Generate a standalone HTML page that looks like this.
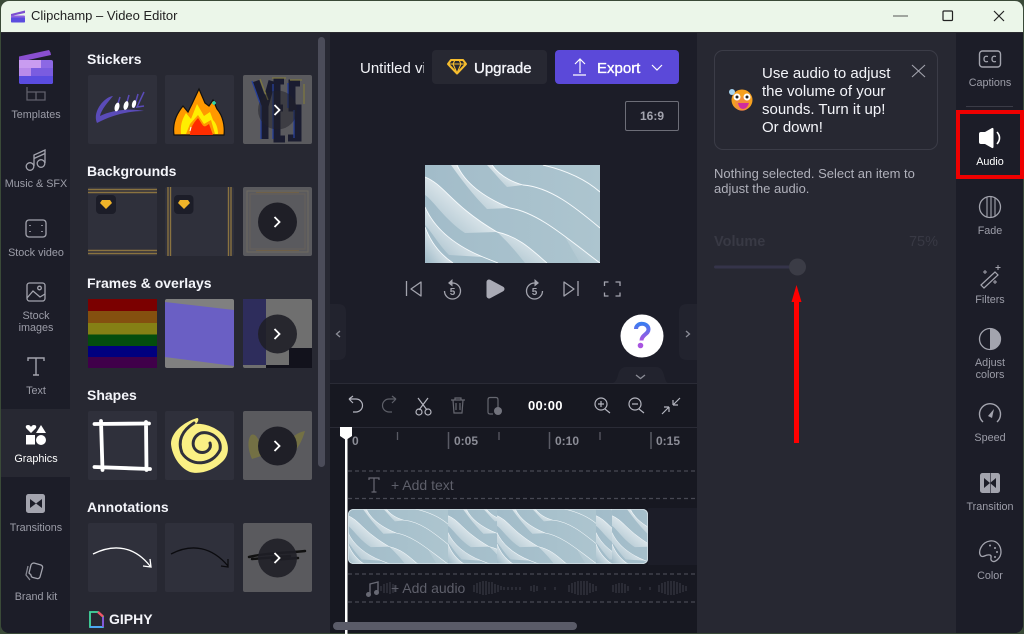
<!DOCTYPE html>
<html lang="en"><head><meta charset="utf-8"><title>Clipchamp – Video Editor</title>
<style>
html,body{margin:0;padding:0;width:1024px;height:634px;overflow:hidden;background:#3a4a38}
body{font-family:"Liberation Sans",sans-serif;position:relative}
div{position:absolute;box-sizing:border-box}
.t{white-space:nowrap;line-height:16px}
.l{font-size:10.8px;color:#9c9da8;text-align:center;width:68px;line-height:12px}
.h{font-size:14px;font-weight:700;color:#f4f5fa;left:87px;white-space:nowrap;line-height:18px}
.r{font-size:10.8px;color:#9c9da8;text-align:center;width:68px;left:956px;line-height:12px}
.tick{font-size:12px;font-weight:700;color:#8b8c96;white-space:nowrap;line-height:14px}
svg{position:absolute;left:0;top:0}
</style></head><body>
<div style="left:1px;top:1px;width:1022px;height:632px;border-radius:8px;overflow:hidden;background:#1c1d28"></div>
<div style="left:1px;top:1px;width:1022px;height:32px;background:#ebf6e9;border-radius:8px 8px 0 0;border-bottom:1px solid #2a2a30"></div>
<div class="t" style="left:31px;top:8px;font-size:13px;color:#222">Clipchamp – Video Editor</div>

<div style="left:1px;top:33px;width:69px;height:600px;background:#1c1d28;border-radius:0 0 0 8px"></div>
<div style="left:1px;top:409px;width:69px;height:68px;background:#272832"></div>
<div style="left:70px;top:33px;width:260px;height:600px;background:#272832"></div>
<div style="left:697px;top:33px;width:259px;height:600px;background:#272832"></div>
<div style="left:956px;top:33px;width:67px;height:600px;background:#1c1d28;border-radius:0 0 8px 0"></div>
<div style="left:330px;top:384px;width:367px;height:249px;background:#171821"></div>
<div style="left:330px;top:383px;width:367px;height:1px;background:#2a2b36"></div>
<div style="left:330px;top:427px;width:367px;height:1px;background:#2a2b36"></div>

<div style="left:432px;top:50px;width:115px;height:34px;background:#272832;border-radius:4px"></div>
<div style="left:555px;top:50px;width:124px;height:34px;background:#5b49d9;border-radius:4px"></div>
<div style="left:625px;top:101px;width:54px;height:30px;border:1px solid #6d6e78;border-radius:2px"></div>
<div style="left:714px;top:50px;width:224px;height:100px;border:1px solid #3b3c47;border-radius:9px"></div>

<svg width="1024" height="634" viewBox="0 0 1024 634" fill="none">
<defs>
<linearGradient id="hl" x1="1" y1="0" x2="0" y2="1"><stop offset=".15" stop-color="#fff" stop-opacity="1"/><stop offset=".95" stop-color="#fff" stop-opacity="0"/></linearGradient>
<linearGradient id="bg" x1="0" y1="0" x2="1" y2="0"><stop offset="0" stop-color="#a2bcc9"/><stop offset="1" stop-color="#adc5cf"/></linearGradient>
<linearGradient id="q" x1="0" y1="0" x2="0" y2="1"><stop offset="0" stop-color="#3c7cf0"/><stop offset="1" stop-color="#a855e0"/></linearGradient>
<clipPath id="cw"><rect width="175" height="98"/></clipPath>
<symbol id="w" viewBox="0 0 175 98" preserveAspectRatio="none">
<g clip-path="url(#cw)">
<rect width="175" height="98" fill="url(#bg)"/>
<path d="M0 12C20 20 26 40 72 67L40 68C20 55 8 35 0 30Z" fill="url(#hl)"/>
<path d="M32 0C40 18 58 32 85 43L62 44C48 30 36 14 26 0Z" fill="url(#hl)"/>
<path d="M67 0C74 10 84 16 98 20L82 22C74 14 68 6 62 0Z" fill="url(#hl)"/>
<path d="M0 42C8 60 24 78 58 92L24 90C14 80 6 66 0 60Z" fill="url(#hl)"/>
<path d="M0 62C6 78 16 90 28 98L0 98Z" fill="url(#hl)"/>
<path d="M72 67C95 72 108 86 122 98L100 98C92 88 84 78 72 67Z" fill="url(#hl)" opacity=".7"/>
<path d="M140 72C155 80 165 90 175 98L155 98Z" fill="url(#hl)" opacity=".3"/>
<g stroke="#f7fbfd" stroke-width=".9">
<path d="M0 12C20 20 26 40 72 67C95 72 108 86 122 98"/>
<path d="M32 0C40 18 58 32 85 43C115 48 145 76 175 98"/>
<path d="M67 0C74 10 84 16 98 20C125 22 150 42 175 63"/>
<path d="M118 0C135 4 158 12 175 27"/>
<path d="M0 42C8 60 24 78 58 92L73 98"/>
<path d="M0 62C6 78 16 90 28 98"/>
</g></g></symbol>
</defs>

<!-- title bar -->
<path d="M11 14L25 10.5V13L11 16Z" fill="#7c4fd0"/><rect x="11" y="15.5" width="14" height="7" rx="1" fill="#8d63e0"/><rect x="11" y="17.5" width="14" height="5" rx="1" fill="#5a4cde"/>
<path d="M893 16H908" stroke="#555" stroke-width="1"/>
<rect x="943" y="11" width="9.5" height="9.5" rx="1" stroke="#222" stroke-width="1.2"/>
<path d="M994 11L1004 21M1004 11L994 21" stroke="#222" stroke-width="1.2"/>

<!-- logo -->
<path d="M19 56.500L49 50L50.500 52.500L51 55L19 62Z" fill="#8a4fd0"/>
<rect x="19" y="60" width="34" height="24" rx="2" fill="#8c68e4"/>
<rect x="19" y="60" width="22" height="8" fill="#c99cf0"/><rect x="19" y="68" width="12" height="8" fill="#b98aea"/><rect x="31" y="68" width="22" height="8" fill="#7a5ce0"/><path d="M19 76H53V82Q53 84 51 84H21Q19 84 19 82Z" fill="#5a4ce0"/>
<!-- sidebar icons -->
<g stroke="#a3a4ae" stroke-width="1.300">
<path d="M27 92H45V100H27ZM27 92V87M36 92V100" opacity=".5"/>
<path d="M34 166V155L45 150V163"/><circle cx="30" cy="166.500" r="3.800"/><circle cx="41" cy="163.500" r="3.800"/><path d="M34 158.500L45 153.500"/>
<rect x="26" y="220" width="20" height="17" rx="3"/><path d="M30 225v1M30 231v1M42 225v1M42 231v1" stroke-width="1.600"/>
<rect x="27" y="283" width="18" height="18" rx="2.500"/><circle cx="39.500" cy="288" r="1.800"/><path d="M27 298L33 291L40 297L45 294"/>
<path d="M28 361V358H44V361M36 358V375M33 375H39" stroke-width="1.400"/>
<path d="M29 573L31 565Q32 563 34 563L41 565Q43 566 42.500 568L40 577Q39 579 37 578.500L33 577.500Q31 577 31 575Z"/><path d="M28 566L26 575L30 580" opacity=".8"/>
</g>
<g fill="#fff"><path d="M31 433L26 428Q25 425 28 425Q30 425 31 427Q32 425 34 425Q37 425 36 428Z"/><path d="M41 425L46 433H36Z"/><rect x="26" y="435" width="9" height="9.500"/><circle cx="41" cy="440" r="5"/></g>
<rect x="26" y="494" width="19" height="19" rx="2.500" fill="#a3a4ae"/><path d="M30 499L36 503.500L30 508ZM42 499L36 503.500L42 508Z" fill="#1c1d28"/>

<!-- scrollbar -->
<rect x="318" y="37" width="7" height="430" rx="3.500" fill="#4b4c59"/>
<!-- tiles -->
<g fill="#2f303b">
<rect x="88" y="75" width="69" height="69" rx="2"/><rect x="165" y="75" width="69" height="69" rx="2"/>
<rect x="88" y="187" width="69" height="69" rx="2"/><rect x="165" y="187" width="69" height="69" rx="2"/>
<rect x="88" y="411" width="69" height="69" rx="2"/><rect x="165" y="411" width="69" height="69" rx="2"/>
<rect x="88" y="523" width="69" height="69" rx="2"/><rect x="165" y="523" width="69" height="69" rx="2"/>
</g>
<g fill="#5a5a5e">
<rect x="243" y="75" width="69" height="69" rx="2"/><rect x="243" y="187" width="69" height="69" rx="2"/><rect x="243" y="411" width="69" height="69" rx="2"/><rect x="243" y="523" width="69" height="69" rx="2"/>
</g>
<!-- cool -->
<path d="M97 123C92 112 104 97 113 96C108 102 101 110 100 116C112 110 130 108 144 111C128 111 112 115 97 123Z" fill="#5a4bb8"/>
<path d="M120 97L116 110M129 95L125 109M138 94L134 108M144 92L137 107L144 106" stroke="#5a4bb8" stroke-width="1.500"/>
<ellipse cx="117" cy="107" rx="2.300" ry="4.500" fill="#fff" transform="rotate(15 117 107)"/><ellipse cx="126" cy="105.500" rx="2.300" ry="4.500" fill="#fff" transform="rotate(15 126 105.500)"/><ellipse cx="134" cy="104" rx="2" ry="4" fill="#fff" transform="rotate(15 134 104)"/>
<!-- fire -->
<path d="M174 135C172 122 178 112 183 106L188 112L192 104L199 89L205 103L209 106L213 100L217 109C223 116 225 126 224 135Z" fill="#ff9800" stroke="#111" stroke-width="1.200"/>
<path d="M181 134C180 124 183 118 186 113L191 119L197 104L204 116L210 112L213 120C217 124 218 130 218 134Z" fill="#ffee00"/>
<path d="M186 134L190 124L198 115L204 124L211 120L215 134Z" fill="#ff9800"/>
<path d="M190 135C190 128 194 122 198 118C201 122 203 128 206 126L209 124L213 135Z" fill="#ff2d00"/>
<path d="M191 127L190 131" stroke="#fff" stroke-width="1"/><path d="M212 103H216M214 101V105" stroke="#2fd8a8" stroke-width="1.600"/>
<!-- yes -->
<g stroke="#1a1c30" stroke-width="7" fill="none">
<path d="M256 81L265 106L272 81M265 106V139"/><path d="M284 81H277V139H285M277 108H283"/><path d="M300 83H292V108H298V138H288"/></g>
<g stroke="#27409a" stroke-width="1.300" fill="none"><path d="M252 81L261 106V139"/><path d="M273 84V139"/><path d="M288 83V108M294 110V138"/></g>
<g stroke="#7c7640" stroke-width="1.300" fill="none"><path d="M260 79L268 100M272 78H286M302 80H290M304 84V104"/></g>
<!-- bg tiles -->
<g stroke="#8a7340" stroke-width="1.400"><path d="M88 189.500H157M88 192.500H157M88 250.500H157M88 253.500H157M168 187V256M170.500 187V256M228.500 187V256M231 187V256"/></g>
<g fill="#1c1d28"><rect x="96" y="195" width="20" height="19" rx="4"/><rect x="174" y="195" width="19.500" height="19" rx="4"/></g>
<g fill="#f0b429"><path d="M102 200H110L112 203L106 209L100 203Z"/><path d="M180 200H188L190 203L184 209L178 203Z"/></g>
<path d="M247 191H308V252H247Z" stroke="#6e6a60" stroke-width="1"/><path d="M250 194H305V249H250Z" stroke="#66605a" stroke-width="1"/>
<path d="M256 192.500H299M256 250.500H299" stroke="#6f6048" stroke-width="1"/>
<!-- frames -->
<rect x="88" y="299" width="69" height="12" fill="#7b0000"/><rect x="88" y="311" width="69" height="12" fill="#84500f"/><rect x="88" y="323" width="69" height="11.500" fill="#858015"/><rect x="88" y="334.500" width="69" height="11.500" fill="#044d0e"/><rect x="88" y="346" width="69" height="11" fill="#00007f"/><rect x="88" y="357" width="69" height="11" fill="#40004a"/>
<rect x="165" y="299" width="69" height="69" rx="2" fill="#808080"/><path d="M165 302L234 310V366L165 357Z" fill="#6a5fc4"/>
<rect x="243" y="299" width="69" height="69" rx="2" fill="#6f6f6f"/><rect x="243" y="299" width="23" height="66" fill="#2e2d5c"/><rect x="289" y="348" width="23" height="20" fill="#12121c"/><rect x="266" y="365" width="46" height="3" fill="#12121c"/>
<!-- shapes -->
<path d="M94.500 424L149 423.500M101 421L102.500 470M146 422L146.500 470M94.500 467L150 469" stroke="#fff" stroke-width="3.800" stroke-linecap="round"/>
<path d="M197 418C199 418 199 421 196 424C205 423 218 428 224 436C230 446 229 456 222 462C214 470 200 475 190 472C180 468 172 456 171 444C171 432 184 422 197 418Z" fill="#faf084"/>
<path d="M194 423C183 430 177 440 182 453C191 467 212 466 220 450C222 438 210 431 201 433C192 436 190 448 199 452C206 454 212 449 210 443" stroke="#2f303b" stroke-width="3" stroke-linecap="round" fill="none"/>
<path d="M251 435C258 432 260 445 264 455L252 459C248 450 247 440 251 435ZM305 431C300 448 292 456 285 456C288 445 290 434 305 431Z" fill="#737044"/>
<!-- annotations -->
<path d="M93 554C115 543 135 547 150 566M150 559L151 567L143 566" stroke="#fff" stroke-width="1.300"/>
<path d="M171 554C192 543 212 547 228 566M228 559L228 567L221 566" stroke="#0b0b0f" stroke-width="1.300"/>
<path d="M249 557C265 553 285 553 305 551M252 559L290 556M272 560L298 558" stroke="#111" stroke-width="2.500" stroke-linecap="round"/>
<!-- overlay circles -->
<g fill="#1f1f27"><circle cx="277.500" cy="110" r="19.500" opacity=".5"/><circle cx="277.500" cy="222" r="19.500"/><circle cx="277.500" cy="334" r="19.500" opacity=".9"/><circle cx="277.500" cy="446" r="19.500"/><circle cx="277.500" cy="558" r="19.500" opacity=".9"/></g>
<g stroke="#fff" stroke-width="1.800"><path d="M274.500 105L279.500 110L274.500 115M274.500 217L279.500 222L274.500 227M274.500 329L279.500 334L274.500 339M274.500 441L279.500 446L274.500 451M274.500 553L279.500 558L274.500 563"/></g>
<!-- giphy -->
<path d="M90 612H98L103 616.500V627H90Z" stroke="#41d9a0" stroke-width="1.800"/><path d="M90 627H103" stroke="#4ea6ff" stroke-width="1.800"/><path d="M98 612L103 616.500" stroke="#f0566a" stroke-width="2.500"/><path d="M103 617V627" stroke="#8a4fe0" stroke-width="1.800"/>

<!-- header icons -->
<path d="M451 60H463L466 64L457 73.500L448 64Z" stroke="#f6bd2e" stroke-width="2" stroke-linejoin="round"/><path d="M448 64H466M457 73L453 64L455 60M457 73L461 64L459 60" stroke="#f6bd2e" stroke-width="1.100"/>
<path d="M580 73V60M575 64L580 59L585 64M573 75H586" stroke="#fff" stroke-width="1.200"/>
<path d="M652 65L657 70L662 65" stroke="#fff" stroke-width="1.200"/>
<!-- preview -->
<use href="#w" x="425" y="165" width="175" height="98"/>
<!-- player controls -->
<g stroke="#a3a4ae" stroke-width="1.300">
<path d="M406.500 281V296M421 282V296L411 289Z" stroke-linejoin="round"/>
<path d="M452.500 283A8 8 0 1 1 444.500 291"/>
<path d="M578 281V296M564 282V296L574 289Z" stroke-linejoin="round"/>
<path d="M534.500 283A8 8 0 1 0 542.500 291"/>
<path d="M604.500 286V282H608.500M615.500 282H620V286M620 292.500V296H615.500M608.500 296H604.500V292.500"/>
</g>
<path d="M452.500 279L448 283L452.500 286.500ZM534.500 279L539 283L534.500 286.500Z" fill="#a3a4ae"/>
<g font-family="Liberation Sans" font-size="10" font-weight="700" fill="#a3a4ae" text-anchor="middle"><text x="452.500" y="295">5</text><text x="534.500" y="295">5</text></g>
<path d="M489 282L502 289L489 296Z" fill="#a9aab5" stroke="#a9aab5" stroke-width="5" stroke-linejoin="round"/>
<!-- handles -->
<path d="M330 304H338Q346 304 346 312V352Q346 360 338 360H330Z" fill="#22232e"/>
<path d="M697 304H687Q679 304 679 312V352Q679 360 687 360H697Z" fill="#22232e"/>
<path d="M340 331L336.500 334L340 337" stroke="#8b8c96" stroke-width="1.300"/>
<path d="M686 331L689.500 334L686 337" stroke="#8b8c96" stroke-width="1.300"/>
<path d="M612 383Q616 383 618 375Q620 367 626 367H656Q662 367 664 375Q666 383 668 383Z" fill="#22232e"/>
<path d="M636 375L640.500 378.500L645 375" stroke="#8b8c96" stroke-width="1.300"/>
<circle cx="642" cy="336" r="21.500" fill="#fff"/>
<path d="M636 329C636 322 648.500 322 648.500 329.500C648.500 334 641.500 335 641.500 340.500" stroke="url(#q)" stroke-width="4" fill="none"/><circle cx="640.500" cy="345.500" r="2.800" fill="#a855e0"/>
<!-- timeline toolbar -->
<g stroke="#b4b5bf" stroke-width="1.200">
<path d="M349 399L353 396M349 399L353 403M349 399H356A6 6 0 0 1 356 412H353"/>
<g opacity=".45"><path d="M396 399L392 396M396 399L392 403M396 399H389A6 6 0 0 0 389 412H392"/></g>
<path d="M418 398L427 410M428 398L419 410"/><circle cx="419" cy="412" r="3"/><circle cx="428" cy="412" r="3"/>
<g opacity=".5"><path d="M451 400H465M455 400V398H461V400M453 400L454 413H462L463 400M456 403V410M460 403V410"/>
<path d="M490 397.500H496Q498 397.500 498 400V408M490 397.500Q488 397.500 488 400V412Q488 414 490 414H493"/></g>
<circle cx="601" cy="404" r="6"/><path d="M605 409L610 413M598 404H604M601 401V407"/>
<circle cx="635" cy="404" r="6"/><path d="M639 409L644 413M632 404H638"/>
<path d="M662 414L669 407M669 407H664M669 407V412M680 398L673 405M673 405H678M673 405V400"/>
</g>
<circle cx="498" cy="411" r="4" fill="#72737d"/>
<!-- ruler -->
<g stroke="#595a64" stroke-width="1.300"><path d="M397.500 432V440M499 432V440M600 432V440"/><path d="M448.500 432V449M549.500 432V449M651 432V449" stroke-width="1.500"/></g>
<!-- dashes -->
<g stroke="#474853" stroke-width="1.200" stroke-dasharray="4 3"><path d="M348 471H697M348 498.500H697M348 574H697M348 602H697"/></g>
<path d="M369 480V478H379V480M374 478V492M371.500 492H376.500" stroke="#686974" stroke-width="1.200"/>
<rect x="648" y="508" width="49" height="57" fill="#1c1d28"/>
<!-- waveform -->
<g stroke="#2a2b35" stroke-width="2">
<path d="M381 586v5M384 584v9M387 583v10M390 582v12M393 584v9M396 585v7M474 585v7M477 583v10M480 582v12M483 581v14M486 581v14M489 582v12M492 582v12M495 584v9M498 585v7M501 586v4M504 587v3M508 587v3M512 587v3M516 587v3M520 587v3M531 586v5M534 585v7M537 586v5M545 587v3M555 587v3M569 585v7M572 583v10M575 582v12M578 581v14M581 581v14M584 581v14M587 581v14M590 583v10M593 584v8M596 586v5M613 585v7M616 584v9M619 583v10M622 583v10M625 584v9M628 586v5M640 587v3M650 587v3M659 585v7M662 583v10M665 582v12M668 581v14M671 581v14M674 581v14M677 582v12M680 583v10M683 585v7M686 586v5"/></g>
<path d="M370 594V584L378 582V592" stroke="#686974" stroke-width="1.400"/><circle cx="368.500" cy="594.500" r="2.500" fill="#686974"/><circle cx="376.500" cy="592.500" r="2.500" fill="#686974"/>
<!-- clip -->
<clipPath id="cc"><rect x="348" y="509" width="300" height="55" rx="5"/></clipPath>
<g clip-path="url(#cc)">
<use href="#w" x="348" y="509" width="100" height="55"/>
<use href="#w" x="448" y="509" width="100" height="55"/>
<use href="#w" x="497" y="509" width="100" height="55"/>
<use href="#w" x="596" y="509" width="100" height="55"/>
<use href="#w" x="612" y="509" width="100" height="55"/>
</g>
<rect x="348.500" y="509.500" width="299" height="54" rx="5" stroke="#d3dfe5" stroke-width=".8"/>
<!-- playhead -->
<rect x="345" y="434" width="2.500" height="200" fill="#fff"/>
<path d="M340 427H352V436L346 440L340 436Z" fill="#fff"/>
<rect x="333" y="622" width="244" height="8" rx="4" fill="#5a5b68"/>

<!-- emoji -->
<circle cx="742" cy="100" r="10.500" fill="#f5a020"/><circle cx="742" cy="104" r="7" fill="#f0706a" opacity=".35"/>
<circle cx="737" cy="97" r="3.500" fill="#fff"/><circle cx="747" cy="97" r="3.500" fill="#fff"/><circle cx="737" cy="97" r="1.500" fill="#222"/><circle cx="747" cy="97" r="1.500" fill="#222"/>
<path d="M738 103H749Q747 109 743 109Q739 109 738 103Z" fill="#d02c9e"/>
<circle cx="732" cy="92" r="3" fill="#a8d4f0"/>
<path d="M912 65L925 77M925 65L912 77" stroke="#a3a4ae" stroke-width="1.100"/>
<!-- slider -->
<rect x="714" y="265.500" width="78" height="3" rx="1.500" fill="#35344a"/>
<circle cx="797.500" cy="267" r="8.500" fill="#3b3c46"/>
<path d="M794 300H799V443H794Z" fill="#f00"/><path d="M796.500 285L801.500 302H791.500Z" fill="#f00"/>

<!-- right sidebar -->
<rect x="979.500" y="51" width="21" height="16" rx="3" stroke="#a3a4ae" stroke-width="1.400"/>
<path d="M988 56.500Q984 55.500 984 59Q984 62.500 988 61.500M996 56.500Q992 55.500 992 59Q992 62.500 996 61.500" stroke="#a3a4ae" stroke-width="1.300"/>
<rect x="966" y="106" width="47" height="1" fill="#3b3c47"/>
<path d="M979 134Q979 132 981 132H985L992 128Q993.500 127.500 993.500 129.500V146.500Q993.500 148.500 992 148L985 144H981Q979 144 979 142Z" fill="#fff"/><path d="M997 132Q1002 138 997 144" stroke="#fff" stroke-width="1.600"/>
<rect x="958" y="112" width="64" height="65" stroke="#ee0000" stroke-width="4"/>
<circle cx="990" cy="207" r="10.500" stroke="#a3a4ae" stroke-width="1.300"/><path d="M987 197V217M991 196.500V217.500M995 197.500V216.500" stroke="#a3a4ae" stroke-width="1.100"/>
<path d="M981 285L995 272L998 275L984 288Z" stroke="#a3a4ae" stroke-width="1.200"/><path d="M985 270v4M983 272h4M998 265v5M995.500 267.500h5M995 280v4M993 282h4" stroke="#a3a4ae" stroke-width="1"/>
<circle cx="990" cy="339" r="10.500" stroke="#a3a4ae" stroke-width="1.300"/><path d="M990 328.500A10.500 10.500 0 0 1 990 349.500Z" fill="#a3a4ae"/>
<path d="M983 422A10.500 10.500 0 1 1 997 422" stroke="#a3a4ae" stroke-width="1.400"/><path d="M988 416L994 409L992 418Z" fill="#a3a4ae"/>
<rect x="980" y="473" width="20" height="20" rx="2.500" fill="#a3a4ae"/><path d="M984 478L990 483L984 488ZM996 478L990 483L996 488Z" fill="#1c1d28"/><path d="M990.500 473V493" stroke="#1c1d28" stroke-width=".6"/>
<path d="M990 541C997 540 1001 546 1001 552C1001 558 995 563 992 561C989 559 993 556 990 555C985 554 984 558 981 556C977 552 982 542 990 541Z" stroke="#a3a4ae" stroke-width="1.300"/>
<circle cx="990" cy="545.500" r="1" fill="#a3a4ae"/><circle cx="995" cy="548" r="1" fill="#a3a4ae"/><circle cx="997" cy="552" r="1" fill="#a3a4ae"/><circle cx="995" cy="557" r="1" fill="#a3a4ae"/>
</svg>

<div class="l" style="left:2px;top:109px">Templates</div>
<div class="l" style="left:2px;top:178px">Music &amp; SFX</div>
<div class="l" style="left:2px;top:247px">Stock video</div>
<div class="l" style="left:2px;top:310px">Stock<br>images</div>
<div class="l" style="left:2px;top:385px">Text</div>
<div class="l" style="left:2px;top:453px;color:#fff">Graphics</div>
<div class="l" style="left:2px;top:522px">Transitions</div>
<div class="l" style="left:2px;top:591px">Brand kit</div>

<div class="h" style="top:50px">Stickers</div>
<div class="h" style="top:162px">Backgrounds</div>
<div class="h" style="top:274px">Frames &amp; overlays</div>
<div class="h" style="top:386px">Shapes</div>
<div class="h" style="top:498px">Annotations</div>
<div class="h" style="top:610px;left:109px">GIPHY</div>

<div class="t" style="left:360px;top:61px;width:64px;overflow:hidden;font-size:15px;color:#f2f3f8">Untitled video</div>
<div class="t" style="left:474px;top:61px;font-size:15px;color:#f4f5fa;-webkit-text-stroke:.35px #f4f5fa">Upgrade</div>
<div class="t" style="left:597px;top:61px;font-size:15px;color:#fff;-webkit-text-stroke:.35px #fff">Export</div>
<div class="t" style="left:625px;top:108px;width:54px;text-align:center;font-size:12px;font-weight:700;color:#a3a4ae">16:9</div>

<div class="t" style="left:528px;top:398px;font-size:13px;font-weight:700;color:#fff;letter-spacing:.3px">00:00</div>
<div class="tick" style="left:352px;top:434px">0</div>
<div class="tick" style="left:454px;top:434px">0:05</div>
<div class="tick" style="left:555px;top:434px">0:10</div>
<div class="tick" style="left:656px;top:434px">0:15</div>
<div class="t" style="left:391px;top:477px;font-size:14px;color:#5e5f6a">+ Add text</div>
<div class="t" style="left:391px;top:580px;font-size:14px;color:#5e5f6a">+ Add audio</div>

<div class="t" style="left:762px;top:65px;font-size:15px;line-height:18px;color:#f4f5fa;white-space:nowrap">Use audio to adjust<br>the volume of your<br>sounds. Turn it up!<br>Or down!</div>
<div class="t" style="left:714px;top:166px;font-size:13px;line-height:15px;color:#b0b1bb;white-space:nowrap">Nothing selected. Select an item to<br>adjust the audio.</div>
<div class="t" style="left:714px;top:234px;font-size:14.500px;font-weight:700;color:#383944">Volume</div>
<div class="t" style="left:888px;top:234px;width:50px;text-align:right;font-size:14.500px;color:#383944">75%</div>

<div class="r" style="top:77px">Captions</div>
<div class="r" style="top:156px;color:#fff">Audio</div>
<div class="r" style="top:225px">Fade</div>
<div class="r" style="top:294px">Filters</div>
<div class="r" style="top:357px">Adjust<br>colors</div>
<div class="r" style="top:432px">Speed</div>
<div class="r" style="top:501px">Transition</div>
<div class="r" style="top:570px">Color</div>
</body></html>
